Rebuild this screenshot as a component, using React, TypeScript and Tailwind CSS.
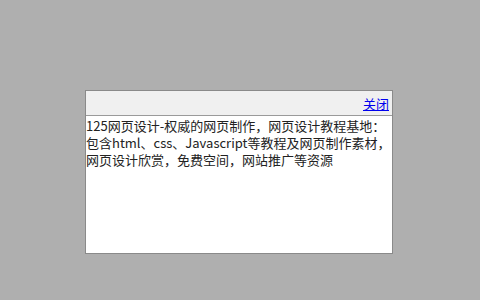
export default function App() {
  return (
    <div className="flex h-[300px] w-[480px] items-start bg-[#afafaf] pl-[85px] pt-[90px] font-['Noto_Sans_CJK_SC','Noto_Sans',sans-serif]">
      <div className="flex h-[164px] w-[308px] flex-col border border-[#8a8a8a] bg-white">
        <div className="flex h-[25px] items-center justify-end border-b border-[#9a9a9a] bg-[#f0f0f0] pr-[3px]">
          <a href="#" className="text-[13px] leading-none text-[#0000ee] underline">
            关闭
          </a>
        </div>
        <p className="pt-[1px] text-[13px] leading-[17px] text-[#222] [text-spacing-trim:space-all]">
          125网页设计-权威的网页制作，网页设计教程基地：包含html、css、Javascript等教程及网页制作素材，网页设计欣赏，免费空间，网站推广等资源
        </p>
      </div>
    </div>
  );
}
